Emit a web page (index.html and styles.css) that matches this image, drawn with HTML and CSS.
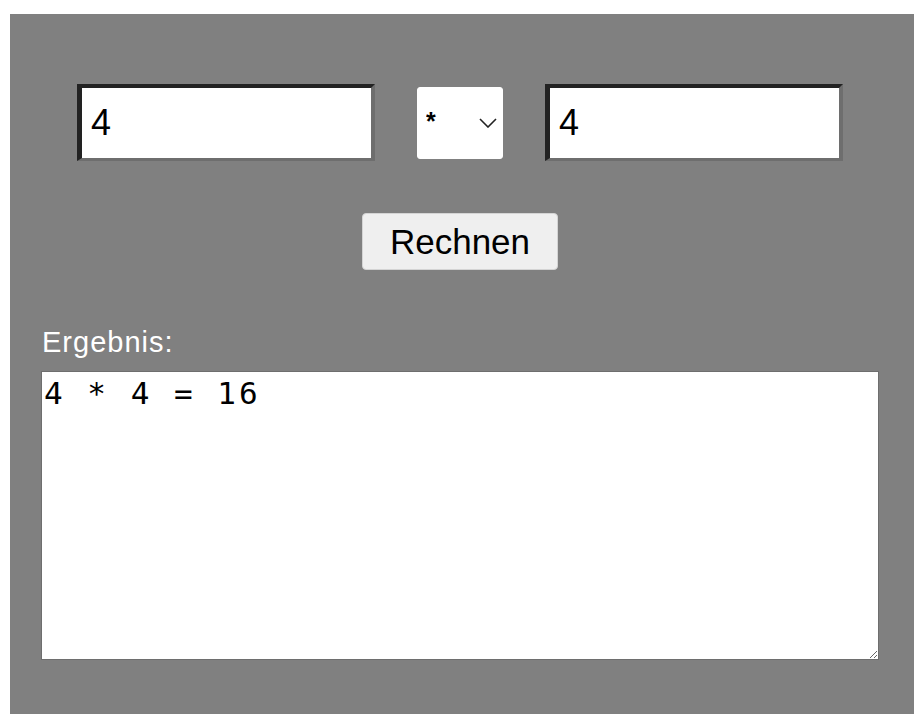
FILE: index.html
```html
<!DOCTYPE html>
<html lang="de">
<head>
<meta charset="utf-8">
<title>Rechner</title>
<link rel="stylesheet" href="styles.css">
</head>
<body>
<div class="app">
  <div class="inputs">
    <input class="num" type="text" value="4">
    <span class="select-wrap">
      <select class="op">
        <option>*</option>
        <option>+</option>
        <option>-</option>
        <option>/</option>
      </select>
      <svg class="chev" width="18" height="10" viewBox="0 0 18 10"><path d="M1 1 L9 9 L17 1" fill="none" stroke="#222" stroke-width="1.6"/></svg>
    </span>
    <input class="num" type="text" value="4">
  </div>
  <div class="actions">
    <button class="btn" type="button">Rechnen</button>
  </div>
  <label class="label" for="out">Ergebnis:</label>
  <textarea id="out" class="result">4 * 4 = 16</textarea>
</div>
</body>
</html>
```
FILE: styles.css
```css
html, body {
  margin: 0;
  padding: 0;
  background: #ffffff;
}
.app {
  margin: 14px 10px 0 10px;
  height: 700px;
  box-sizing: border-box;
  background: #808080;
  padding: 70px 35px 0 31px;
  font-family: "Liberation Sans", Arial, sans-serif;
}
.inputs {
  display: flex;
  justify-content: center;
  align-items: center;
  gap: 42px;
}
.num {
  width: 298px;
  height: 77px;
  box-sizing: border-box;
  border-style: solid;
  border-width: 4px 4px 3px 5px;
  border-color: #222222 #6e6e6e #6e6e6e #222222;
  background: #ffffff;
  padding: 0 8px 0 9px;
  margin: 0;
  font-family: "Liberation Sans", Arial, sans-serif;
  font-size: 36px;
  color: #000;
  outline: none;
}
.select-wrap {
  position: relative;
  display: block;
  width: 86px;
  height: 72px;
}
.op {
  -webkit-appearance: none;
  appearance: none;
  width: 86px;
  height: 72px;
  box-sizing: border-box;
  border: 1px solid #ffffff;
  border-radius: 3px;
  background: #ffffff;
  padding: 0 0 4px 8px;
  margin: 0;
  font-family: "Liberation Sans", Arial, sans-serif;
  font-size: 25px;
  font-weight: bold;
  color: #000;
}
.chev {
  position: absolute;
  left: 62px;
  top: 31px;
  pointer-events: none;
}
.actions {
  display: flex;
  justify-content: center;
  margin-top: 52px;
}
.btn {
  width: 196px;
  height: 57px;
  box-sizing: border-box;
  background: #efefef;
  border: 1px solid #d4d4d4;
  border-radius: 4px;
  font-family: "Liberation Sans", Arial, sans-serif;
  font-size: 35px;
  color: #000;
  padding: 0;
  margin: 0;
}
.label {
  display: block;
  margin-top: 56px;
  padding-left: 1px;
  line-height: 32px;
  font-size: 29px;
  letter-spacing: 1px;
  color: #ffffff;
}
.result {
  display: block;
  margin: 13px 0 0 0;
  width: 838px;
  height: 289px;
  box-sizing: border-box;
  border: 1px solid #6e6e6e;
  background: #ffffff;
  padding: 3px 2px 2px 2px;
  font-family: "DejaVu Sans Mono", "Liberation Mono", monospace;
  font-size: 31px;
  letter-spacing: 3px;
  color: #000;
  resize: both;
  outline: none;
}
```
